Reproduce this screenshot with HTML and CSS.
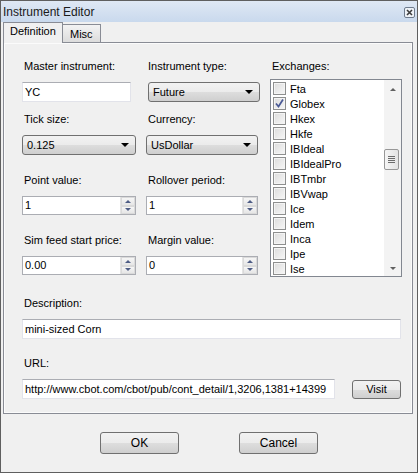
FILE: index.html
```html
<!DOCTYPE html>
<html>
<head>
<meta charset="utf-8">
<link rel="stylesheet" href="styles.css">
</head>
<body>
<div class="window">
  <div class="titlebar">
    <span class="title">Instrument Editor</span>
    <span class="close"><svg width="11" height="11" viewBox="0 0 11 11"><rect x="0.5" y="0.5" width="10" height="10" rx="1.5" fill="#eef2f7" stroke="#6f7c8e"/><path d="M3 3 L8 8 M8 3 L3 8" stroke="#3c3c3c" stroke-width="1.6"/></svg></span>
  </div>
  <div class="tabs">
    <div class="tab active">Definition</div>
    <div class="tab">Misc</div>
  </div>
  <div class="panel">
    <div class="top">
      <div class="fields">
        <div class="row">
          <div class="cell"><div class="label">Master instrument:</div><div class="textbox narrow">YC</div></div>
          <div class="cell"><div class="label">Instrument type:</div><div class="combo shift">Future<span class="arrow"></span></div></div>
        </div>
        <div class="row r2">
          <div class="cell"><div class="label">Tick size:</div><div class="combo wide">0.125<span class="arrow"></span></div></div>
          <div class="cell"><div class="label">Currency:</div><div class="combo">UsDollar<span class="arrow"></span></div></div>
        </div>
        <div class="row">
          <div class="cell"><div class="label">Point value:</div><div class="spin wide"><span class="val">1</span><span class="btns"><span class="up"></span><span class="dn"></span></span></div></div>
          <div class="cell"><div class="label">Rollover period:</div><div class="spin"><span class="val">1</span><span class="btns"><span class="up"></span><span class="dn"></span></span></div></div>
        </div>
        <div class="row">
          <div class="cell"><div class="label">Sim feed start price:</div><div class="spin wide"><span class="val">0.00</span><span class="btns"><span class="up"></span><span class="dn"></span></span></div></div>
          <div class="cell"><div class="label">Margin value:</div><div class="spin"><span class="val">0</span><span class="btns"><span class="up"></span><span class="dn"></span></span></div></div>
        </div>
      </div>
      <div class="exchanges">
        <div class="label">Exchanges:</div>
        <div class="listbox">
          <div class="items">
            <div class="item"><span class="cb"></span>Fta</div>
            <div class="item"><span class="cb"><svg width="11" height="11" viewBox="0 0 11 11"><path d="M2 5.5 L4.5 8.5 L9 1.5" fill="none" stroke="#4a5a96" stroke-width="1.7"/></svg></span>Globex</div>
            <div class="item"><span class="cb"></span>Hkex</div>
            <div class="item"><span class="cb"></span>Hkfe</div>
            <div class="item"><span class="cb"></span>IBIdeal</div>
            <div class="item"><span class="cb"></span>IBIdealPro</div>
            <div class="item"><span class="cb"></span>IBTmbr</div>
            <div class="item"><span class="cb"></span>IBVwap</div>
            <div class="item"><span class="cb"></span>Ice</div>
            <div class="item"><span class="cb"></span>Idem</div>
            <div class="item"><span class="cb"></span>Inca</div>
            <div class="item"><span class="cb"></span>Ipe</div>
            <div class="item"><span class="cb"></span>Ise</div>
          </div>
          <div class="scrollbar">
            <span class="sarrow upa"></span>
            <span class="thumb"><span class="grip"></span></span>
            <span class="sarrow dna"></span>
          </div>
        </div>
      </div>
    </div>
    <div class="block desc">
      <div class="label">Description:</div>
      <div class="textbox full">mini-sized Corn</div>
    </div>
    <div class="block url">
      <div class="label">URL:</div>
      <div class="urlrow">
        <div class="textbox urlbox">http://www.cbot.com/cbot/pub/cont_detail/1,3206,1381+14399</div>
        <div class="button visit">Visit</div>
      </div>
    </div>
  </div>
  <div class="buttons">
    <div class="button big">OK</div>
    <div class="button big">Cancel</div>
  </div>
</div>
</body>
</html>
```
FILE: styles.css
```css
* { box-sizing: border-box; }
html, body { margin: 0; padding: 0; }
body {
  background: #f0f0f0;
  font-family: "Liberation Sans", Arial, sans-serif;
  font-size: 11px;
  color: #000;
}
.window {
  width: 418px;
  height: 473px;
  border: 1px solid #5f5f5f;
  background: #f0f0f0;
  display: flex;
  flex-direction: column;
}
.titlebar {
  height: 21px;
  background: linear-gradient(#dfe8f4, #c9d9ed);
  display: flex;
  align-items: center;
  justify-content: space-between;
  padding: 0 2px 0 2px;
}
.title { font-size: 12px; color: #1a1a1a; }
.close { display: flex; margin-top: 1px; }
.tabs {
  height: 20px;
  display: flex;
  align-items: flex-end;
  padding-left: 2px;
  position: relative;
  z-index: 1;
}
.tab {
  height: 18px;
  padding: 0 7px;
  border: 1px solid #898c95;
  border-bottom: none;
  background: linear-gradient(#f3f3f3, #dcdcdc);
  line-height: 18px;
  margin-bottom: 0;
}
.tab.active {
  height: 21px;
  margin-bottom: -1px;
  background: #f0f0f0;
  line-height: 17px;
  padding: 0 6px 0 6px;
  width: 60px;
}
.tab + .tab { border-left: none; width: 38px; padding: 0 0 0 7px; }
.panel {
  margin: 0 4px 0 2px;
  height: 372px;
  border: 1px solid #898c95;
  box-shadow: inset 0 0 0 1px #fbfbfb;
  padding: 17px 11px 0 18px;
}
.label { height: 13px; line-height: 13px; margin: 0 0 9px 2px; white-space: nowrap; }
.top { display: flex; }
.fields { width: 248px; }
.row { display: grid; grid-template-columns: 124px 124px; margin-top: 19px; }
.row:first-child { margin-top: 0; }
.row.r2 { margin-top: 11px; }
.textbox {
  height: 20px;
  background: #fff;
  border: 1px solid #e2e3ea;
  border-top-color: #abadb3;
  padding-left: 2px;
  line-height: 18px;
  white-space: nowrap;
  overflow: hidden;
}
.textbox.narrow { width: 109px; }
.combo {
  position: relative;
  width: 112px;
  height: 20px;
  border: 1px solid #707070;
  border-radius: 3px;
  background: linear-gradient(#f2f2f2 0%, #ebebeb 50%, #dddddd 51%, #cfcfcf 100%);
  padding-left: 4px;
  line-height: 18px;
}
.combo.wide { width: 114px; }
.combo.shift { margin-left: 2px; }
.arrow {
  position: absolute;
  right: 6px;
  top: 7px;
  border-left: 4px solid transparent;
  border-right: 4px solid transparent;
  border-top: 4px solid #000;
}
.spin {
  position: relative;
  width: 112px;
  height: 19px;
  background: #fff;
  border: 1px solid #abadb3;
  display: flex;
  justify-content: space-between;
  line-height: 17px;
  padding-left: 2px;
}
.spin.wide { width: 114px; }
.btns {
  width: 15px;
  display: flex;
  flex-direction: column;
  border-left: 1px solid #e4e4e4;
}
.btns span {
  flex: 1;
  display: flex;
  align-items: center;
  justify-content: center;
  background: linear-gradient(#f6f6f6, #e6e6e6);
  border: 1px solid #dadada;
}
.btns span::after {
  content: "";
  border-left: 3px solid transparent;
  border-right: 3px solid transparent;
}
.btns .up::after { border-bottom: 3px solid #4e5d85; }
.btns .dn::after { border-top: 3px solid #4e5d85; }
.exchanges { margin-left: 0; }
.exchanges .label { margin-bottom: 6px; }
.listbox {
  width: 132px;
  height: 198px;
  border: 1px solid #828790;
  background: #fff;
  display: flex;
  justify-content: space-between;
}
.items { padding: 1px 0 0 2px; }
.item { height: 15px; display: flex; align-items: center; white-space: nowrap; }
.cb {
  width: 13px;
  height: 13px;
  border: 1px solid #8e8f8f;
  background: linear-gradient(135deg, #dcdcdc, #f7f7f7);
  box-shadow: inset 0 0 0 1px #f4f4f4;
  margin-right: 4px;
  display: flex;
  align-items: center;
  justify-content: center;
}
.scrollbar {
  width: 17px;
  background: #f3f3f3;
  display: flex;
  flex-direction: column;
  align-items: center;
  position: relative;
}
.sarrow {
  position: absolute;
  border-left: 3px solid transparent;
  border-right: 3px solid transparent;
}
.sarrow.upa { top: 8px; border-bottom: 3px solid #606060; }
.sarrow.dna { bottom: 6px; border-top: 3px solid #606060; }
.thumb {
  position: absolute;
  top: 69px;
  left: 0;
  width: 15px;
  height: 21px;
  border: 1px solid #979797;
  border-radius: 2px;
  background: linear-gradient(90deg, #f5f5f5, #e3e3e3);
  display: flex;
  align-items: center;
  justify-content: center;
}
.grip {
  width: 7px;
  height: 7px;
  background: repeating-linear-gradient(#6b6b6b 0 1px, transparent 1px 2px);
}
.block.desc { margin-top: 20px; }
.block.url { margin-top: 18px; }
.textbox.full { width: 379px; }
.urlrow { display: flex; align-items: flex-start; }
.urlbox { width: 313px; }
.button {
  border: 1px solid #707070;
  border-radius: 3px;
  background: linear-gradient(#f2f2f2 0%, #ebebeb 50%, #dddddd 51%, #cfcfcf 100%);
  text-align: center;
}
.visit { width: 49px; height: 19px; line-height: 17px; margin: 1px 0 0 17px; }
.buttons {
  display: flex;
  justify-content: center;
  gap: 60px;
  margin-top: 18px;
}
.big { width: 79px; height: 22px; line-height: 20px; font-size: 12px; }
```
